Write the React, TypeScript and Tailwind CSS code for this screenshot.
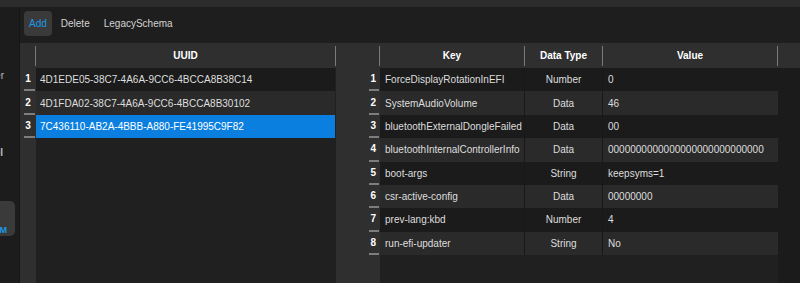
import React from "react";

const uuids = [
  "4D1EDE05-38C7-4A6A-9CC6-4BCCA8B38C14",
  "4D1FDA02-38C7-4A6A-9CC6-4BCCA8B30102",
  "7C436110-AB2A-4BBB-A880-FE41995C9F82",
];

const entries: [string, string, string][] = [
  ["ForceDisplayRotationInEFI", "Number", "0"],
  ["SystemAudioVolume", "Data", "46"],
  ["bluetoothExternalDongleFailed", "Data", "00"],
  ["bluetoothInternalControllerInfo", "Data", "0000000000000000000000000000"],
  ["boot-args", "String", "keepsyms=1"],
  ["csr-active-config", "Data", "00000000"],
  ["prev-lang:kbd", "Number", "4"],
  ["run-efi-updater", "String", "No"],
];

function Sep() {
  return <div className="w-px h-[20px] mt-[1px] bg-[#7a7a7a] shrink-0" />;
}

export default function App() {
  return (
    <div
      className="w-[800px] h-[283px] overflow-hidden flex flex-col bg-[#1e1e1e] text-[10px] text-[#dedede]"
      style={{ fontFamily: '"Liberation Sans", Arial, sans-serif' }}
    >
      <div className="h-[7px] bg-[#2c2c2c] shrink-0" />
      <div className="flex flex-1 min-h-0">
        {/* sidebar (scrolled, only right edge visible) */}
        <div className="w-[19px] shrink-0 overflow-hidden bg-[#1c1c1c] flex flex-col items-end">
          <div className="mt-[63px] pr-[15px] whitespace-nowrap leading-[12px] text-[#bdbdbd]">Booter</div>
          <div className="mt-[65px] pr-[16px] whitespace-nowrap leading-[12px] text-[#bdbdbd] font-bold">Kernel</div>
          <div className="mt-[42px] mr-[4px] w-[52px] h-[35px] shrink-0 rounded-[5px] bg-[#3a3a3a] flex flex-col items-end justify-end pr-[8px] pb-[1px]">
            <span className="text-[9px] font-bold leading-[10px] text-[#1a9be6] whitespace-nowrap">NVRAM</span>
          </div>
        </div>
        <div className="w-px shrink-0 bg-[#151515]" />

        <div className="flex-1 flex flex-col min-w-0">
          {/* toolbar */}
          <div className="h-[36px] shrink-0 flex items-start pt-[4px] pl-[4px] gap-[4px] bg-[#1e1e1e]">
            <div className="h-[25px] px-[5px] rounded-[4px] bg-[#3a3a3a] flex items-center text-[#1a9be6]">Add</div>
            <div className="h-[25px] px-[5px] flex items-center text-[#d4d4d4]">Delete</div>
            <div className="h-[25px] px-[5px] flex items-center text-[#d4d4d4]">LegacySchema</div>
          </div>

          <div className="flex flex-1 min-h-0">
            {/* left table */}
            <div className="w-[316px] shrink-0 flex flex-col">
              <div className="h-[25px] shrink-0 flex items-center bg-[#2f2f2f] text-white font-bold">
                <div className="w-[16px] flex justify-end">
                  <Sep />
                </div>
                <div className="w-[300px] flex items-center">
                  <span className="flex-1 text-center">UUID</span>
                  <Sep />
                </div>
              </div>
              <div className="flex flex-1">
                <div className="w-[16px] bg-[#2f2f2f] flex flex-col">
                  {uuids.map((_, i) => (
                    <div key={i} className="h-[23.375px] flex flex-col">
                      <div className="flex-1 flex items-center justify-center text-white font-bold">{i + 1}</div>
                      <div className="h-[2px] w-[11px] ml-[4px] bg-[#7e7e7e]" />
                    </div>
                  ))}
                </div>
                <div className="w-[299px] flex flex-col bg-[#202020]">
                  {uuids.map((u, i) => (
                    <div
                      key={u}
                      className={
                        "h-[23.375px] flex items-center pl-[4px] whitespace-nowrap " +
                        (i === 2 ? "bg-[#0b7fe0] text-white" : i % 2 === 0 ? "bg-[#1b1b1b]" : "bg-[#2a2a2a]")
                      }
                    >
                      {u}
                    </div>
                  ))}
                </div>
                <div className="w-px bg-[#202020]" />
              </div>
            </div>

            {/* right table */}
            <div className="flex-1 flex flex-col min-w-0">
              <div className="h-[25px] shrink-0 flex items-center bg-[#2f2f2f] text-white font-bold">
                <div className="w-[44px] flex justify-end">
                  <Sep />
                </div>
                <div className="w-[145px] flex items-center">
                  <span className="flex-1 text-center">Key</span>
                  <Sep />
                </div>
                <div className="w-[78px] flex items-center">
                  <span className="flex-1 text-center">Data Type</span>
                  <Sep />
                </div>
                <div className="w-[175px] flex items-center">
                  <span className="flex-1 text-center">Value</span>
                  <Sep />
                </div>
                <div className="flex-1" />
              </div>
              <div className="flex flex-1">
                <div className="w-[44px] bg-[#2f2f2f] flex flex-col">
                  {entries.map((_, i) => (
                    <div key={i} className="h-[23.375px] flex flex-col">
                      <div className="flex-1 flex items-center justify-end pr-[4px] text-white font-bold">{i + 1}</div>
                      <div className="h-[2px] w-[10px] ml-[33px] bg-[#7e7e7e]" />
                    </div>
                  ))}
                </div>
                <div className="w-[398px] flex flex-col bg-[#202020]">
                  {entries.map(([k, t, v], i) => (
                    <div
                      key={k}
                      className={"h-[23.375px] flex items-center whitespace-nowrap " + (i % 2 === 0 ? "bg-[#1b1b1b]" : "bg-[#2a2a2a]")}
                    >
                      <div className="w-[145px] h-full flex items-center pl-[5px] border-r border-[#181818]">{k}</div>
                      <div className="w-[78px] h-full flex items-center justify-center border-r border-[#181818]">{t}</div>
                      <div className="w-[175px] h-full flex items-center pl-[5px] overflow-hidden">{v}</div>
                    </div>
                  ))}
                </div>
                <div className="flex-1 bg-[#1b1b1b]" />
              </div>
            </div>
          </div>
        </div>
      </div>
    </div>
  );
}
